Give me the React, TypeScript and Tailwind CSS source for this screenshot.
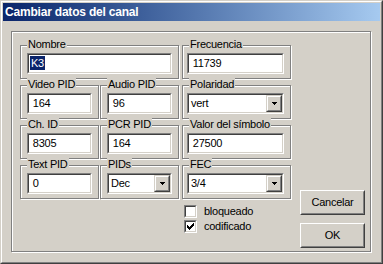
import React from "react";

const etched = "border border-[#808080] shadow-[inset_1px_1px_0_#fff,1px_1px_0_#fff]";

function Group({ label, className = "", children }: { label: string; className?: string; children?: React.ReactNode }) {
  return (
    <div className={`relative h-[34px] pt-[7px] ${etched} ${className}`}>
      <span className="absolute left-[6px] top-[-8px] bg-[#d4d0c8] px-[1px] leading-[13px] whitespace-nowrap">{label}</span>
      {children}
    </div>
  );
}

function Field({ children, className = "" }: { children?: React.ReactNode; className?: string }) {
  return (
    <div className={`h-[21px] bg-white border border-t-[#808080] border-l-[#808080] border-r-white border-b-white ${className}`}>
      <div className="h-full border border-t-[#404040] border-l-[#404040] border-r-[#d4d0c8] border-b-[#d4d0c8] pl-[1px] pt-[1px] leading-[14px] whitespace-nowrap overflow-hidden">
        {children}
      </div>
    </div>
  );
}

function Select({ value, className = "" }: { value: string; className?: string }) {
  return (
    <div className={`h-[21px] bg-white border border-t-[#808080] border-l-[#808080] border-r-white border-b-white ${className}`}>
      <div className="h-full flex border border-t-[#404040] border-l-[#404040] border-r-[#d4d0c8] border-b-[#d4d0c8]">
        <div className="flex-1 pl-[2px] leading-[16px]">{value}</div>
        <div className="w-[16px] h-[17px] bg-[#d4d0c8] border border-t-[#d4d0c8] border-l-[#d4d0c8] border-r-[#404040] border-b-[#404040]">
          <div className="h-full border border-t-white border-l-white border-r-[#808080] border-b-[#808080] flex items-center justify-center">
            <svg width="5" height="3" viewBox="0 0 5 3" shapeRendering="crispEdges">
              <rect x="0" y="0" width="5" height="1" fill="#000" />
              <rect x="1" y="1" width="3" height="1" fill="#000" />
              <rect x="2" y="2" width="1" height="1" fill="#000" />
            </svg>
          </div>
        </div>
      </div>
    </div>
  );
}

function Checkbox({ checked }: { checked?: boolean }) {
  const px: [number, number][] = [
    [6, 0], [5, 1], [6, 1], [0, 2], [4, 2], [5, 2], [6, 2], [0, 3], [1, 3], [3, 3], [4, 3], [5, 3],
    [0, 4], [1, 4], [2, 4], [3, 4], [4, 4], [1, 5], [2, 5], [3, 5], [2, 6],
  ];
  return (
    <div className="w-[13px] h-[13px] bg-white border border-t-[#808080] border-l-[#808080] border-r-white border-b-white">
      <div className="w-full h-full border border-t-[#404040] border-l-[#404040] border-r-[#d4d0c8] border-b-[#d4d0c8] flex items-center justify-center">
        {checked && (
          <svg width="7" height="7" viewBox="0 0 7 7" shapeRendering="crispEdges">
            {px.map(([x, y], i) => (
              <rect key={i} x={x} y={y} width="1" height="1" fill="#000" />
            ))}
          </svg>
        )}
      </div>
    </div>
  );
}

function Button({ label, className = "" }: { label: string; className?: string }) {
  return (
    <div className={`w-[65px] h-[25px] border border-t-white border-l-white border-r-[#404040] border-b-[#404040] ${className}`}>
      <div className="h-full border border-t-[#d4d0c8] border-l-[#d4d0c8] border-r-[#808080] border-b-[#808080] flex items-center justify-center leading-[13px]">
        {label}
      </div>
    </div>
  );
}

export default function App() {
  return (
    <div className="w-[383px] h-[264px] bg-[#d4d0c8] border border-t-[#d4d0c8] border-l-[#d4d0c8] border-r-[#404040] border-b-[#404040] font-['Liberation_Sans',Arial,sans-serif] text-[11px] tracking-[-0.25px] text-black">
      <div className="h-full border border-t-white border-l-white border-r-[#808080] border-b-[#808080] p-[1px]">
        <div className="h-[18px] bg-gradient-to-r from-[#0a246a] to-[#a6caf0] flex items-center pl-[2px]">
          <span className="text-white font-bold text-[12px] tracking-[-0.2px] leading-[14px]">Cambiar datos del canal</span>
        </div>
        <div className={`ml-[8px] mt-[10px] w-[360px] h-[221px] ${etched} pl-[8px] pt-[13px] flex`}>
          <div className="w-[271px] flex flex-col">
            <div className="flex">
              <Group label="Nombre" className="w-[159px] px-[6px]">
                <Field>
                  <span className="inline-block bg-[#0a246a] text-white leading-[14px] pl-[1px] pr-[1px]">K3</span>
                </Field>
              </Group>
              <Group label="Frecuencia" className="w-[109px] ml-[3px] pl-[4px] pr-[6px]">
                <Field>&nbsp;11739</Field>
              </Group>
            </div>
            <div className="flex mt-[6px]">
              <Group label="Video PID" className="w-[79px] px-[6px]">
                <Field>&nbsp;164</Field>
              </Group>
              <Group label="Audio PID" className="w-[79px] ml-[1px] px-[6px]">
                <Field>&nbsp;96</Field>
              </Group>
              <Group label="Polaridad" className="w-[109px] ml-[3px] pl-[4px] pr-[6px]">
                <Select value="vert" />
              </Group>
            </div>
            <div className="flex mt-[6px]">
              <Group label="Ch. ID" className="w-[79px] px-[6px]">
                <Field>&nbsp;8305</Field>
              </Group>
              <Group label="PCR PID" className="w-[79px] ml-[1px] px-[6px]">
                <Field>&nbsp;164</Field>
              </Group>
              <Group label="Valor del símbolo" className="w-[109px] ml-[3px] pl-[4px] pr-[6px]">
                <Field>&nbsp;27500</Field>
              </Group>
            </div>
            <div className="flex mt-[6px]">
              <Group label="Text PID" className="w-[79px] px-[6px]">
                <Field>&nbsp;0</Field>
              </Group>
              <Group label="PIDs" className="w-[79px] ml-[1px] px-[6px]">
                <Select value="Dec" />
              </Group>
              <Group label="FEC" className="w-[109px] ml-[3px] pl-[4px] pr-[6px]">
                <Select value="3/4" />
              </Group>
            </div>
            <div className="ml-[164px] mt-[6px] flex flex-col gap-[2px]">
              <div className="flex items-center gap-[7px] leading-[13px]">
                <Checkbox />
                <span>bloqueado</span>
              </div>
              <div className="flex items-center gap-[7px] leading-[13px]">
                <Checkbox checked />
                <span>codificado</span>
              </div>
            </div>
          </div>
          <div className="ml-[9px] mt-[145px] flex flex-col gap-[8px]">
            <Button label="Cancelar" />
            <Button label="OK" />
          </div>
        </div>
      </div>
    </div>
  );
}
